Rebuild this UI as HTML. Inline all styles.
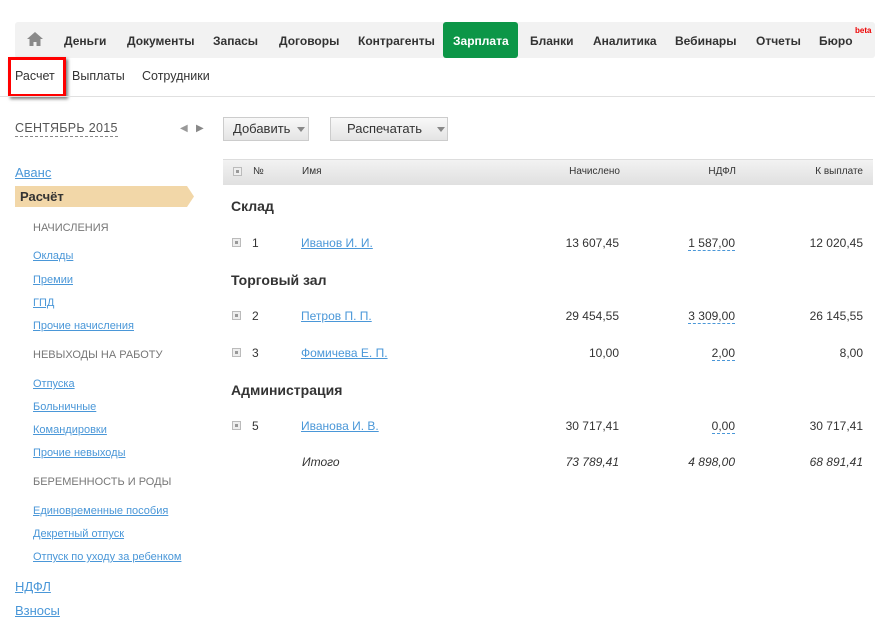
<!DOCTYPE html>
<html><head><meta charset="utf-8"><style>
body{margin:0;width:890px;height:630px;background:#fff;font-family:"Liberation Sans",Arial,sans-serif;color:#333;position:relative;overflow:hidden}
.t{position:absolute;line-height:16px;white-space:nowrap}
.nav{position:absolute;left:15px;top:22px;width:860px;height:36px;background:#f2f2f2;border-radius:3px}
.ni{font-weight:bold;font-size:12px;color:#333;top:33px}
.n{font-size:12px;color:#333}
.a{color:#4a97d8;text-decoration:underline}
.s{font-size:11px}
.g{color:#777;font-size:11px}
.r{text-align:right}
.d{border-bottom:1px dashed #4a97d8;line-height:14px}
.pl{position:absolute;width:7px;height:7px;border:1px solid #bbb;background:#eee}
.pl:after{content:"";position:absolute;left:2px;top:2px;width:3px;height:3px;background:#999}
.btn{position:absolute;height:22px;top:117px;border:1px solid #ccc;background:linear-gradient(#f8f8f8,#e4e4e4);font-size:13px;line-height:22px;color:#333}
.car{display:inline-block;border-left:4px solid transparent;border-right:4px solid transparent;border-top:5px solid #888;vertical-align:middle}
</style></head><body>
<div class="nav"></div>
<div style="position:absolute;left:443px;top:22px;width:75px;height:36px;background:#0c9647;border-radius:3px"></div>
<svg style="position:absolute;left:26px;top:31px" width="18" height="16" viewBox="0 0 18 16"><path d="M9 1L1 8h2.5v7h4v-4h3v4h4V8H17z" fill="#8a8a8a"/></svg>
<div class="t ni" style="left:64px">Деньги</div>
<div class="t ni" style="left:127px">Документы</div>
<div class="t ni" style="left:213px">Запасы</div>
<div class="t ni" style="left:279px">Договоры</div>
<div class="t ni" style="left:358px">Контрагенты</div>
<div class="t ni" style="left:453px;color:#fff">Зарплата</div>
<div class="t ni" style="left:530px">Бланки</div>
<div class="t ni" style="left:593px">Аналитика</div>
<div class="t ni" style="left:675px">Вебинары</div>
<div class="t ni" style="left:756px">Отчеты</div>
<div class="t ni" style="left:819px">Бюро</div>
<div class="t" style="left:855px;top:27px;font-size:8px;line-height:8px;color:#e00;font-weight:bold">beta</div>

<div class="t" style="left:15px;top:68px;font-size:12.5px">Расчет</div>
<div class="t" style="left:72px;top:68px;font-size:12.5px">Выплаты</div>
<div class="t" style="left:142px;top:68px;font-size:12.5px">Сотрудники</div>
<div style="position:absolute;left:8px;top:57px;width:52px;height:34px;border:3px solid #f00;box-shadow:2px 2px 3px rgba(0,0,0,.5)"></div>
<div style="position:absolute;left:0;top:96px;width:875px;height:1px;background:#e0e0e0"></div>

<div class="t" style="left:15px;top:121px;font-size:12.5px;color:#555;border-bottom:1px dashed #888;line-height:15px;letter-spacing:.3px">СЕНТЯБРЬ 2015</div>
<div class="t" style="left:180px;top:121px;font-size:10px;color:#999">◀</div>
<div class="t" style="left:196px;top:121px;font-size:10px;color:#888">▶</div>

<div class="btn" style="left:223px;width:84px"><span style="margin-left:9px">Добавить</span> <span class="car" style="margin-left:3px"></span></div>
<div class="btn" style="left:330px;width:116px"><span style="margin-left:16px">Распечатать</span> <span class="car" style="margin-left:11px"></span></div>

<div style="position:absolute;left:223px;top:159px;width:650px;height:25px;background:linear-gradient(#f2f2f2,#e0e0e0);border-top:1px solid #ddd"></div>
<div class="pl" style="left:233px;top:167px"></div>
<div class="t" style="left:253px;top:164px;font-size:10px">№</div>
<div class="t" style="left:302px;top:164px;font-size:10px">Имя</div>
<div class="t r" style="left:500px;width:120px;top:164px;font-size:10px">Начислено</div>
<div class="t r" style="left:636px;width:100px;top:164px;font-size:10px">НДФЛ</div>
<div class="t r" style="left:763px;width:100px;top:164px;font-size:10px">К выплате</div>

<div class="t" style="left:231px;top:198px;font-size:14px;font-weight:bold">Склад</div>
<div class="pl" style="left:232px;top:238px"></div>
<div class="t n" style="left:252px;top:235px">1</div>
<div class="t n a" style="left:301px;top:235px">Иванов И. И.</div>
<div class="t n r" style="left:500px;width:119px;top:235px">13 607,45</div>
<div class="t n r" style="left:636px;width:99px;top:235px"><span class="d">1 587,00</span></div>
<div class="t n r" style="left:763px;width:100px;top:235px">12 020,45</div>

<div class="t" style="left:231px;top:272px;font-size:14px;font-weight:bold">Торговый зал</div>
<div class="pl" style="left:232px;top:311px"></div>
<div class="t n" style="left:252px;top:308px">2</div>
<div class="t n a" style="left:301px;top:308px">Петров П. П.</div>
<div class="t n r" style="left:500px;width:119px;top:308px">29 454,55</div>
<div class="t n r" style="left:636px;width:99px;top:308px"><span class="d">3 309,00</span></div>
<div class="t n r" style="left:763px;width:100px;top:308px">26 145,55</div>

<div class="pl" style="left:232px;top:348px"></div>
<div class="t n" style="left:252px;top:345px">3</div>
<div class="t n a" style="left:301px;top:345px">Фомичева Е. П.</div>
<div class="t n r" style="left:500px;width:119px;top:345px">10,00</div>
<div class="t n r" style="left:636px;width:99px;top:345px"><span class="d">2,00</span></div>
<div class="t n r" style="left:763px;width:100px;top:345px">8,00</div>

<div class="t" style="left:231px;top:382px;font-size:14px;font-weight:bold">Администрация</div>
<div class="pl" style="left:232px;top:421px"></div>
<div class="t n" style="left:252px;top:418px">5</div>
<div class="t n a" style="left:301px;top:418px">Иванова И. В.</div>
<div class="t n r" style="left:500px;width:119px;top:418px">30 717,41</div>
<div class="t n r" style="left:636px;width:99px;top:418px"><span class="d">0,00</span></div>
<div class="t n r" style="left:763px;width:100px;top:418px">30 717,41</div>

<div class="t n" style="left:302px;top:454px;font-style:italic">Итого</div>
<div class="t n r" style="left:500px;width:119px;top:454px;font-style:italic">73 789,41</div>
<div class="t n r" style="left:636px;width:99px;top:454px;font-style:italic">4 898,00</div>
<div class="t n r" style="left:763px;width:100px;top:454px;font-style:italic">68 891,41</div>

<div class="t a" style="left:15px;top:165px;font-size:13px">Аванс</div>
<svg style="position:absolute;left:15px;top:186px" width="180" height="21"><polygon points="0,0 172,0 179,10.5 172,21 0,21" fill="#f2d7a8"/></svg>
<div class="t" style="left:20px;top:189px;font-size:13px;font-weight:bold">Расчёт</div>
<div class="t g" style="left:33px;top:220px">НАЧИСЛЕНИЯ</div>
<div class="t a s" style="left:33px;top:248px">Оклады</div>
<div class="t a s" style="left:33px;top:272px">Премии</div>
<div class="t a s" style="left:33px;top:295px">ГПД</div>
<div class="t a s" style="left:33px;top:318px">Прочие начисления</div>
<div class="t g" style="left:33px;top:347px">НЕВЫХОДЫ НА РАБОТУ</div>
<div class="t a s" style="left:33px;top:376px">Отпуска</div>
<div class="t a s" style="left:33px;top:399px">Больничные</div>
<div class="t a s" style="left:33px;top:422px">Командировки</div>
<div class="t a s" style="left:33px;top:445px">Прочие невыходы</div>
<div class="t g" style="left:33px;top:474px">БЕРЕМЕННОСТЬ И РОДЫ</div>
<div class="t a s" style="left:33px;top:503px">Единовременные пособия</div>
<div class="t a s" style="left:33px;top:526px">Декретный отпуск</div>
<div class="t a s" style="left:33px;top:549px">Отпуск по уходу за ребенком</div>
<div class="t a" style="left:15px;top:579px;font-size:13px">НДФЛ</div>
<div class="t a" style="left:15px;top:603px;font-size:13px">Взносы</div>
</body></html>
